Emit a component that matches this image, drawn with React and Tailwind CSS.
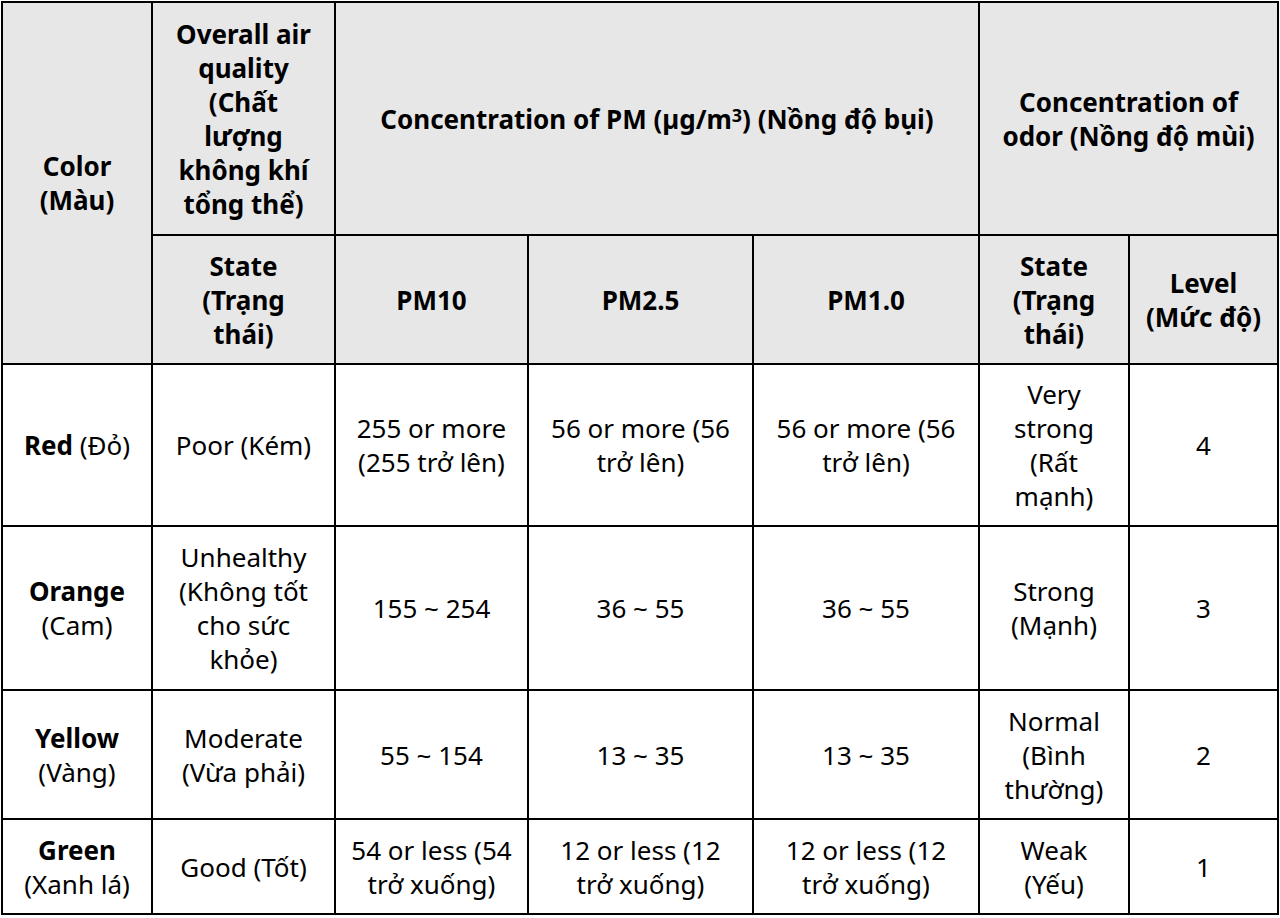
import React from "react";

const th = "border-2 border-black bg-[#e7e7e7] font-bold text-center align-middle px-4";
const td = "border-2 border-black text-center align-middle px-4";
const tdPm10 = "border-2 border-black text-center align-middle px-2";

const rows = [
  {
    color: "Red",
    colorVi: "(Đỏ)",
    inline: true,
    state: "Poor (Kém)",
    pm10: "255 or more (255 trở lên)",
    pm25: "56 or more (56 trở lên)",
    pm1: "56 or more (56 trở lên)",
    odor: "Very strong (Rất mạnh)",
    level: "4",
    h: "h-[162px]",
  },
  {
    color: "Orange",
    colorVi: "(Cam)",
    state: "Unhealthy (Không tốt cho sức khỏe)",
    pm10: "155 ~ 254",
    pm25: "36 ~ 55",
    pm1: "36 ~ 55",
    odor: "Strong (Mạnh)",
    level: "3",
    h: "h-[164px]",
  },
  {
    color: "Yellow",
    colorVi: "(Vàng)",
    state: "Moderate (Vừa phải)",
    pm10: "55 ~ 154",
    pm25: "13 ~ 35",
    pm1: "13 ~ 35",
    odor: "Normal (Bình thường)",
    level: "2",
    h: "h-[129px]",
  },
  {
    color: "Green",
    colorVi: "(Xanh lá)",
    state: "Good (Tốt)",
    pm10: "54 or less (54 trở xuống)",
    pm25: "12 or less (12 trở xuống)",
    pm1: "12 or less (12 trở xuống)",
    odor: "Weak (Yếu)",
    level: "1",
    h: "h-[95px]",
  },
];

export default function App() {
  return (
    <div className="w-[1280px] h-[918px] bg-white pl-[1px] pt-[1px] font-['Noto_Sans',sans-serif] text-[26px] leading-[34px] text-black">
      <table className="table-fixed border-collapse w-[1276px]">
        <colgroup>
          <col className="w-[150px]" />
          <col className="w-[183px]" />
          <col className="w-[193px]" />
          <col className="w-[225px]" />
          <col className="w-[226px]" />
          <col className="w-[150px]" />
          <col className="w-[149px]" />
        </colgroup>
        <thead>
          <tr className="h-[233px]">
            <th rowSpan={2} className={th}>
              Color
              <br />
              (Màu)
            </th>
            <th className={th}>Overall air quality (Chất lượng không khí tổng thể)</th>
            <th colSpan={3} className={th}>
              Concentration of PM (µg/m<sup className="text-[18px] relative -top-[7px] align-baseline">3</sup>) (Nồng độ bụi)
            </th>
            <th colSpan={2} className={th}>Concentration of odor (Nồng độ mùi)</th>
          </tr>
          <tr className="h-[129px]">
            <th className={th}>
              State
              <br />
              (Trạng thái)
            </th>
            <th className={th}>PM10</th>
            <th className={th}>PM2.5</th>
            <th className={th}>PM1.0</th>
            <th className={th}>
              State
              <br />
              (Trạng thái)
            </th>
            <th className="border-2 border-black bg-[#e7e7e7] font-bold text-center align-middle px-1">
              Level
              <br />
              (Mức độ)
            </th>
          </tr>
        </thead>
        <tbody>
          {rows.map((r) => (
            <tr key={r.color} className={r.h}>
              <td className="border-2 border-black text-center align-middle px-2">
                <span className="font-bold">{r.color}</span>
                {r.inline ? " " : <br />}
                {r.colorVi}
              </td>
              <td className={td}>{r.state}</td>
              <td className={tdPm10}>{r.pm10}</td>
              <td className={td}>{r.pm25}</td>
              <td className={td}>{r.pm1}</td>
              <td className={td}>{r.odor}</td>
              <td className={td}>{r.level}</td>
            </tr>
          ))}
        </tbody>
      </table>
    </div>
  );
}
